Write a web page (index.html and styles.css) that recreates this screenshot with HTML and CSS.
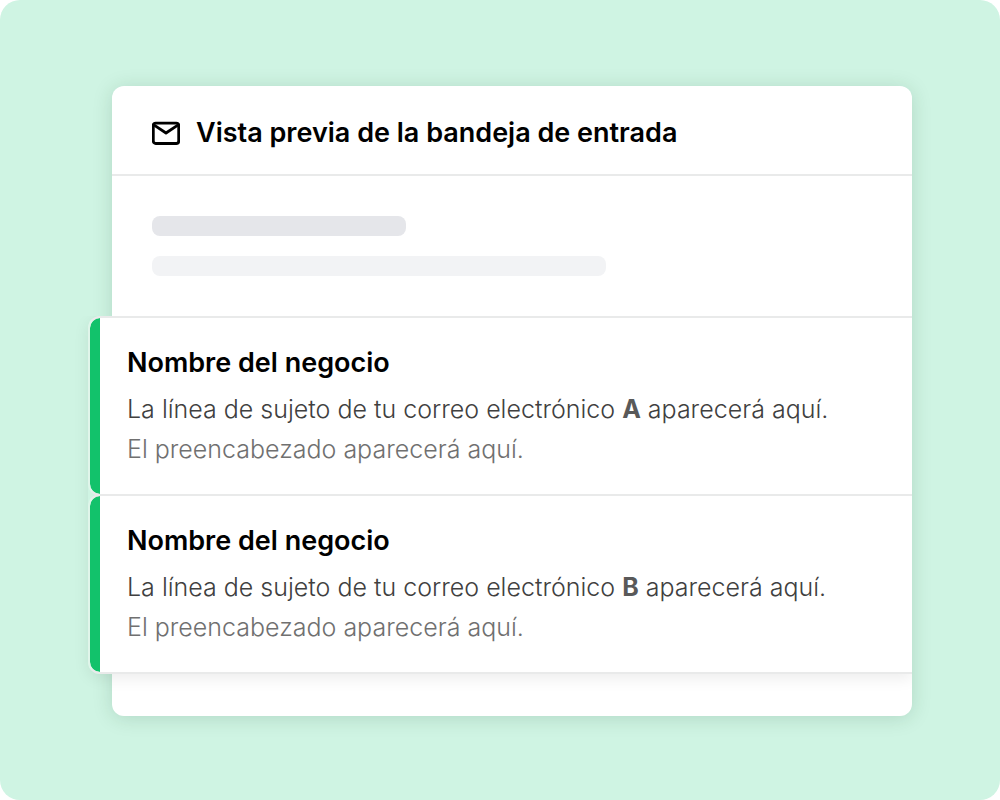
FILE: index.html
```html
<!DOCTYPE html>
<html lang="es">

<head>
    <meta charset="utf-8">
    <meta name="viewport" content="width=device-width, initial-scale=1">
    <title>Vista previa de la bandeja de entrada</title>
    <link rel="stylesheet" href="styles.css">
</head>

<body>
    <main class="stage">
        <section class="inbox">
            <header class="inbox-header">
                <svg class="mail-icon" viewBox="0 0 28 24" aria-hidden="true">
                    <rect x="1.3" y="2.1" width="25.4" height="20.4" rx="2.4"></rect>
                    <path d="M1.8 3.8 L14 12 L26.2 3.8"></path>
                </svg>
                <h1>Vista previa de la bandeja de entrada</h1>
            </header>

            <div class="placeholder">
                <div class="bar bar-short"></div>
                <div class="bar bar-long"></div>
            </div>

            <div class="mails">
                <article class="mail">
                    <h2>Nombre del negocio</h2>
                    <p class="subject">La línea de sujeto de tu correo electrónico <b>A</b> aparecerá aquí.</p>
                    <p class="preheader">El preencabezado aparecerá aquí.</p>
                </article>
                <article class="mail">
                    <h2>Nombre del negocio</h2>
                    <p class="subject">La línea de sujeto de tu correo electrónico <b>B</b> aparecerá aquí.</p>
                    <p class="preheader">El preencabezado aparecerá aquí.</p>
                </article>
            </div>
        </section>
    </main>
</body>

</html>
```
FILE: styles.css
```css
* {
    box-sizing: border-box;
}

body {
    margin: 0;
    background: #fff;
    font-family: Inter, "Liberation Sans", sans-serif;
    color: #000;
}

h1, h2, p {
    margin: 0;
}

/* fondo verde */
.stage {
    min-height: 100vh;
    padding: 86px 88px 84px 112px;
    border-radius: 20px;
    background: #cff4e3;
}

/* tarjeta */
.inbox {
    padding-bottom: 42px;
    border-radius: 12px;
    background: #fff;
    box-shadow: 0 2px 20px rgba(0, 60, 30, .15);
}

.inbox-header {
    display: flex;
    align-items: center;
    gap: 16px;
    padding: 30px 40px 24px;
    border-bottom: 2px solid #e9eaea;
}

.inbox-header h1 {
    font-size: 27px;
    font-weight: 600;
    line-height: 34px;
}

.mail-icon {
    flex: none;
    width: 28px;
    height: 24px;
    fill: none;
    stroke: #000;
    stroke-width: 2.8;
    stroke-linejoin: round;
}

/* lineas grises */
.placeholder {
    display: grid;
    gap: 20px;
    padding: 40px;
}

.bar {
    height: 20px;
    border-radius: 8px;
}

.bar-short {
    width: 254px;
    background: #e5e6ea;
}

.bar-long {
    width: 454px;
    background: #f2f3f5;
}

/* correos: sobresalen por la izquierda */
.mails {
    margin-left: -24px;
    border-radius: 12px 0 0 12px;
    box-shadow: 0 4px 16px rgba(0, 0, 0, .08);
    clip-path: inset(0 0 -30px -30px);
}

.mail {
    padding: 25px 37px 25px;
    border: 2px solid #e9eaea;
    border-left-color: #e0f5ea;
    border-right: 0;
    border-radius: 12px 0 0 12px;
    background: linear-gradient(to right, #12c26b 10px, #fff 10px) padding-box;
}

.mail + .mail {
    margin-top: -2px;
}

.mail h2 {
    font-size: 27px;
    font-weight: 600;
    line-height: 40px;
}

.mail p {
    font-size: 25px;
    font-weight: 300;
    line-height: 40px;
}

.mail b {
    color: #595959;
    font-weight: 700;
}

.mail .subject {
    margin-top: 6px;
    color: #404040;
}

.mail .preheader {
    color: #707070;
}
```
